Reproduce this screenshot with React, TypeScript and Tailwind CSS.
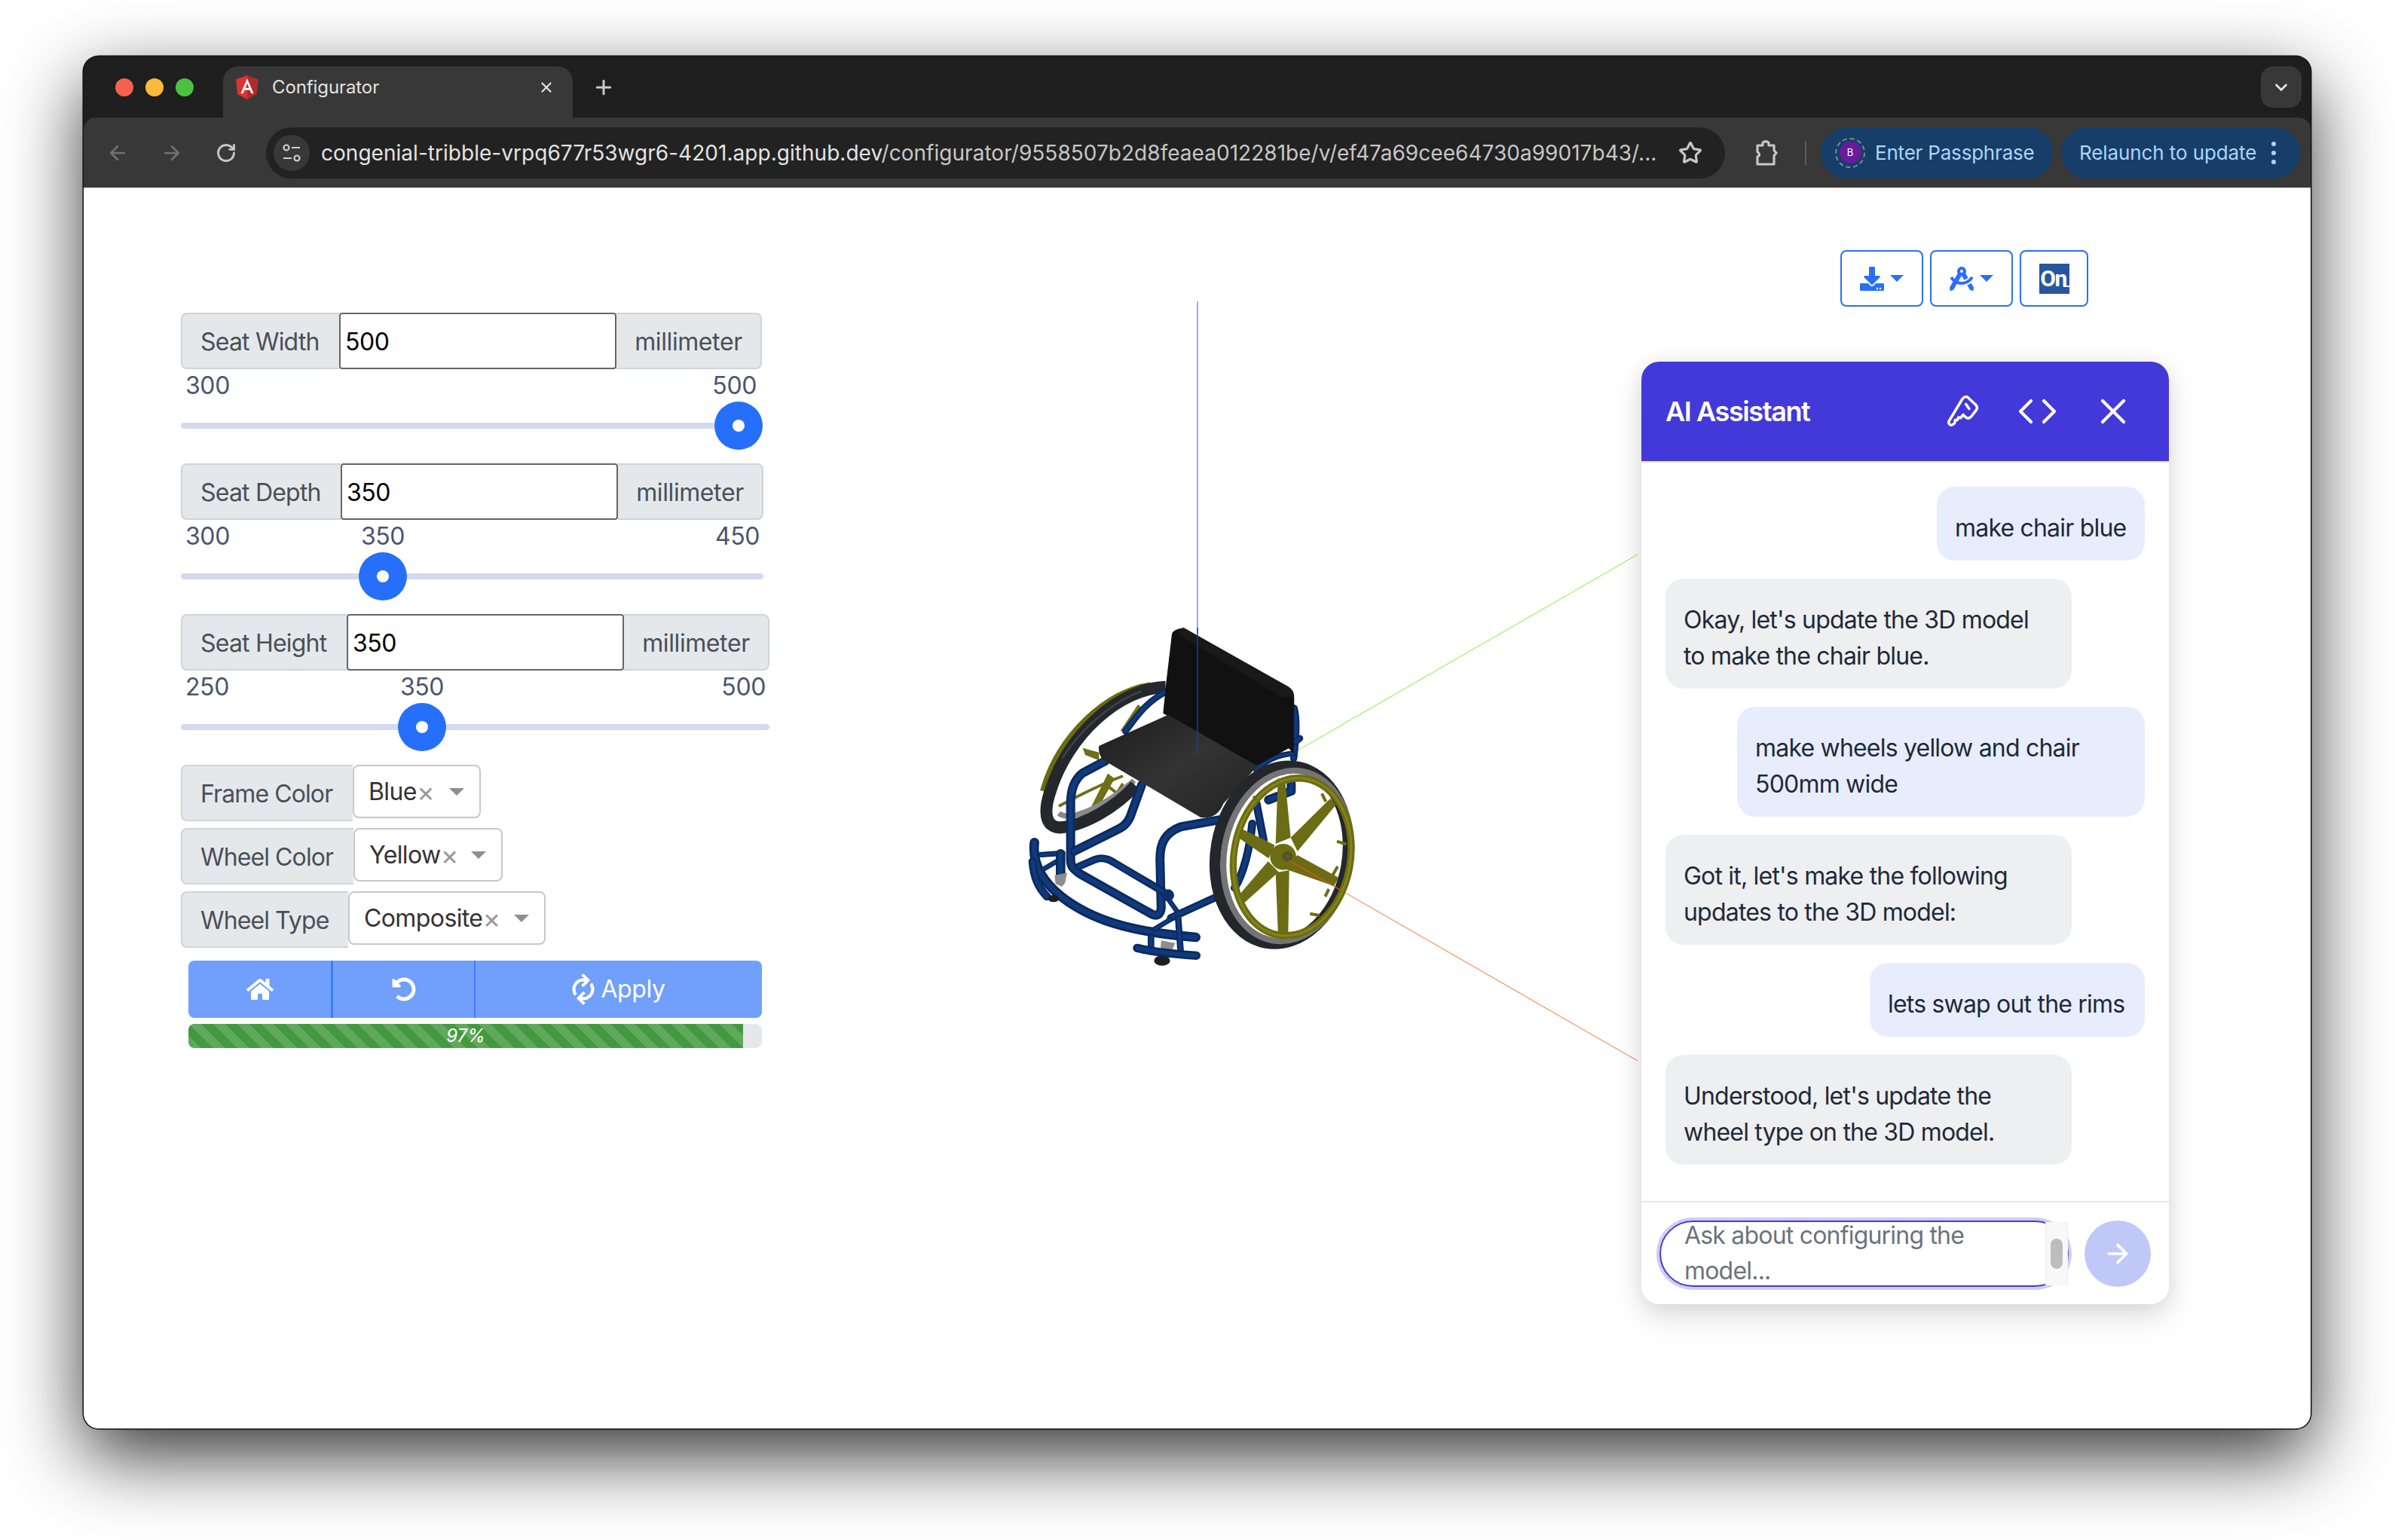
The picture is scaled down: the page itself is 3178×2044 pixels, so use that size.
import { ArrowLeft, ArrowRight, ChevronDown, ChevronLeft, ChevronRight, Plus, RotateCw, Star, X } from "lucide-react";
import { FaDownload, FaDraftingCompass, FaHome, FaSync, FaUndoAlt } from "react-icons/fa";

const sliders = [
  { label: "Seat Width", labelW: "w-[210px]", rowW: "w-[771px]", value: "500", min: "300", max: "500", mid: "", pos: 740, minX: "left-[6px]", maxX: "right-[7px]" },
  { label: "Seat Depth", labelW: "w-[212px]", rowW: "w-[773px]", value: "350", min: "300", max: "450", mid: "350", pos: 268, minX: "left-[6px]", maxX: "right-[5px]" },
  { label: "Seat Height", labelW: "w-[220px]", rowW: "w-[781px]", value: "350", min: "250", max: "500", mid: "350", pos: 320, minX: "left-[6px]", maxX: "right-[5px]" },
];

const selects = [
  { label: "Frame Color", labelW: "w-[228px]", value: "Blue", selectW: "w-[170px]" },
  { label: "Wheel Color", labelW: "w-[229px]", value: "Yellow", selectW: "w-[198px]" },
  { label: "Wheel Type", labelW: "w-[222px]", value: "Composite", selectW: "w-[262px]" },
];

const messages = [
  { user: true, lines: ["make chair blue"], width: "w-[276px]" },
  { user: false, lines: ["Okay, let's update the 3D model", "to make the chair blue."], width: "w-[539px]" },
  { user: true, lines: ["make wheels yellow and chair", "500mm wide"], width: "w-[541px]" },
  { user: false, lines: ["Got it, let's make the following", "updates to the 3D model:"], width: "w-[539px]" },
  { user: true, lines: ["lets swap out the rims"], width: "w-[365px]" },
  { user: false, lines: ["Understood, let's update the", "wheel type on the 3D model."], width: "w-[539px]" },
];

const Tube = ({ d, w = 36 }: { d: string; w?: number }) => (
  <>
    <path d={d} fill="none" stroke="#0b2a5e" strokeWidth={w} strokeLinecap="round" strokeLinejoin="round" />
    <path d={d} fill="none" stroke="#113a7d" strokeWidth={w * 0.5} strokeLinecap="round" strokeLinejoin="round" />
  </>
);

// viewer drawing, coordinates are the full page ones for the axes and a 3x grid for the chair
const Wheelchair = () => (
  <svg className="block" width="848" height="1020" viewBox="1330 400 848 1020">
    <defs>
      <linearGradient id="seat" x1="0" y1="0" x2="1" y2="1">
        <stop offset="0" stopColor="#1c1c1c" />
        <stop offset="0.5" stopColor="#333333" />
        <stop offset="1" stopColor="#232323" />
      </linearGradient>
    </defs>
    <line x1="1720" y1="997" x2="2173" y2="736" stroke="#a5f56e" strokeWidth="1.3" />
    <line x1="1780" y1="1182" x2="2173" y2="1408" stroke="#f59a6c" strokeWidth="1.3" />
    <line x1="1589" y1="400" x2="1589" y2="840" stroke="#7d90f5" strokeWidth="1.5" />
    <g transform="translate(1330 800) scale(0.33333)">
      {/* rear wheel */}
      <path d="M590 328C420 350 220 530 162 750" fill="none" stroke="#6b6b10" strokeWidth="24" />
      <path d="M540 405L470 510L497 516L552 415ZM320 578L385 596L385 628L330 606ZM420 680L345 830L378 825L447 700Z" fill="#6f6f16" />
      <path d="M225 810C300 770 400 720 480 690M310 848C380 830 450 780 480 720M420 730L465 765" fill="none" stroke="#6f6f16" strokeWidth="12" />
      <path d="M225 838C270 875 410 810 525 708" fill="none" stroke="#8a8a8a" strokeWidth="22" />
      <path d="M650 335C470 340 260 520 188 760C160 850 180 898 235 895C330 885 450 815 530 728" fill="none" stroke="#24272c" strokeWidth="48" />
      <path d="M555 352C450 388 320 490 238 620" fill="none" stroke="#3f4349" strokeWidth="7" />

      {/* frame */}
      <Tube d="M655 352C570 395 530 460 490 512" w={26} />
      <Tube d="M410 630L320 678C285 705 272 750 272 800L272 1025C272 1055 290 1065 310 1080L595 1240C620 1252 635 1235 632 1205L628 1030C625 955 650 915 710 892L860 865" w={36} />
      <Tube d="M555 725L510 850C495 885 475 895 455 905L285 990" w={36} />
      <Tube d="M305 1050L370 1022C400 1012 425 1022 445 1035L640 1150" w={30} />
      <Tube d="M128 955C118 1040 160 1110 235 1170C350 1260 500 1310 770 1332" w={38} />
      <Tube d="M120 1030C125 1090 140 1130 178 1170" w={32} />
      <Tube d="M155 1003L240 997" w={22} />
      <Tube d="M165 1060L230 1022" w={20} />
      <Tube d="M232 1000L232 1085" w={38} />
      <Tube d="M650 1165L700 1235" w={20} />
      <Tube d="M670 1255L845 1175" w={30} />
      <Tube d="M605 1300L668 1262" w={20} />
      <Tube d="M700 1255L710 1390" w={26} />
      <Tube d="M592 1330L592 1382" w={26} />
      <Tube d="M1162 420C1175 470 1170 540 1160 620" w={28} />
      <Tube d="M1165 555L1185 540" w={26} />
      <Tube d="M1010 665C1050 630 1090 605 1160 600" w={22} />
      <Tube d="M1150 720L1150 750L1060 785" w={36} />
      <Tube d="M1012 800L1040 945" w={32} />
      <Tube d="M995 880C985 980 960 1080 925 1135" w={32} />
      <circle cx="660" cy="1165" r="24" fill="#0d2f68" />

      {/* casters */}
      <path d="M208 1085L258 1075L250 1115L238 1130L212 1120Z" fill="#8d8d8d" />
      <ellipse cx="204" cy="1178" rx="22" ry="14" fill="#1e1e1e" />
      <path d="M632 1345L688 1355L675 1385L630 1375Z" fill="#8d8d8d" />
      <ellipse cx="636" cy="1425" rx="32" ry="20" fill="#1e1e1e" />
      <Tube d="M537 1375C620 1395 700 1400 772 1405" w={34} />

      {/* seat and back */}
      <path d="M675 125Q680 105 722 100L1140 335Q1162 350 1162 380L1160 600L1140 580L1010 650L640 440L652 320Z" fill="#111111" />
      <path d="M722 100L1140 335Q1160 348 1162 372L1118 378L700 125Q700 108 722 100Z" fill="#191919" />
      <path d="M385 570L660 446L1015 650L880 800Q860 850 815 855L790 855L400 625Q380 600 385 570Z" fill="url(#seat)" />

      {/* front wheel */}
      <ellipse cx="1112" cy="1004" rx="262" ry="356" transform="rotate(10 1112 1004)" fill="none" stroke="#23262b" strokeWidth="44" />
      <ellipse cx="1135" cy="1008" rx="252" ry="342" transform="rotate(10 1135 1008)" fill="none" stroke="#757575" strokeWidth="24" />
      <path d="M1097 700L1125 700L1148 935L1088 960ZM1305 780L1328 805L1175 990L1148 935ZM1340 1095L1320 1128L1125 1060L1175 1005ZM1098 1325L1138 1325L1142 1065L1088 1075ZM930 1178L952 1205L1100 1072L1058 1030ZM942 895L928 928L1060 1018L1085 965Z" fill="#6c6c15" />
      <circle cx="1118" cy="1012" r="52" fill="#6c6c15" />
      <circle cx="1135" cy="1010" r="20" fill="#55550f" />
      <circle cx="1135" cy="1010" r="10" fill="#55585c" />
      <ellipse cx="1154" cy="1012" rx="232" ry="316" transform="rotate(10 1154 1012)" fill="none" stroke="#6d6d10" strokeWidth="28" />
      <ellipse cx="1154" cy="1012" rx="232" ry="316" transform="rotate(10 1154 1012)" fill="none" stroke="#85851f" strokeWidth="8" />
      <path d="M1272 760L1288 792M1332 950L1370 962M1335 1050L1315 1085M1300 1140L1285 1170M1225 1238L1262 1245M1000 770L1012 785" stroke="#6d6d10" strokeWidth="12" />
    </g>
    <line x1="1589" y1="833" x2="1589" y2="1003" stroke="#1f35b8" strokeWidth="1.5" />
    <line x1="1710" y1="1142" x2="1780" y2="1182" stroke="#e0531f" strokeWidth="1.3" />
  </svg>
);

const AngularLogo = () => (
  <svg width="30" height="32" viewBox="0 0 30 32">
    <path d="M15 0L0 5.5L2.3 25L15 32Z" fill="#dd3333" />
    <path d="M15 0L30 5.5L27.7 25L15 32Z" fill="#b02a2a" />
    <path d="M15 4L6.5 24H9.6L11.4 19.5H18.6L20.4 24H23.5ZM17.4 16.8H12.6L15 10.8Z" fill="#ffffff" />
  </svg>
);

const TuneIcon = () => (
  <svg width="26" height="26" viewBox="0 0 26 26" fill="none" stroke="#d0d0d0" strokeWidth="2.2">
    <circle cx="6" cy="6" r="3.5" />
    <path d="M13 6H24M2 20H13" />
    <circle cx="20" cy="20" r="3.5" />
  </svg>
);

const PuzzleIcon = () => (
  <svg width="30" height="34" viewBox="0 0 30 34" fill="none" stroke="#c7c7c7" strokeWidth="3.2" strokeLinejoin="round">
    <path d="M3 7H10V3.5Q14 0 18 3.5V7H25V13.5L28 17L25 20.5V32H3V22Q8 19.5 3 15.5Z" />
  </svg>
);

const KeyIcon = () => (
  <svg width="46" height="44" viewBox="0 0 48 50" fill="none" stroke="#ffffff" strokeWidth="4" strokeLinejoin="round" strokeLinecap="round">
    <path d="M23 6Q27 1 31 4L43 15Q47 19 43 24L36 33Q32 37 28 34L24 30L20 35L17 34L15 38L12 38L11 43Q7 47 4 45Q1 43 3 39Z" />
    <path d="M28 14L33 21" />
  </svg>
);

const Caret = ({ tone }: { tone: "blue" | "gray" }) => (
  <span
    className={
      tone === "blue"
        ? "block h-0 w-0 border-x-[9px] border-t-[9px] border-x-transparent border-t-[#2a6ffb]"
        : "block h-0 w-0 border-x-[10px] border-t-[10px] border-x-transparent border-t-[#8f8f8f]"
    }
  />
);

const BrowserChrome = () => (
  <>
    {/* tab strip */}
    <div className="flex h-[81px] shrink-0 items-end rounded-t-[20px] bg-[#1e1e1e]">
      <div className="mt-[13px] flex h-[68px] w-[185px] shrink-0 items-center gap-[16px] self-start pb-[12px] pl-[42px]">
        <span className="h-[24px] w-[24px] rounded-full bg-[#f7604f]" />
        <span className="h-[24px] w-[24px] rounded-full bg-[#fbba3b]" />
        <span className="h-[24px] w-[24px] rounded-full bg-[#4cc13f]" />
      </div>
      <div className="flex h-[68px] w-[464px] shrink-0 items-center rounded-t-[20px] bg-[#383838] pb-[12px] pl-[17px] pr-[24px]">
        <AngularLogo />
        <span className="ml-[18px] text-[24px] tracking-[-0.1px] text-[#e3e3e3]">Configurator</span>
        <X className="ml-auto text-[#e3e3e3]" size={22} strokeWidth={2.4} />
      </div>
      <div className="ml-[26px] flex h-[68px] items-center pb-[12px]">
        <Plus className="text-[#c8c8c8]" size={30} strokeWidth={2.4} />
      </div>
      <div className="mb-[13px] ml-auto mr-[12px] flex h-[55px] w-[54px] items-center justify-center rounded-[16px] bg-[#383838]">
        <ChevronDown className="text-[#e3e3e3]" size={26} strokeWidth={2.6} />
      </div>
    </div>
    {/* address bar */}
    <div className="flex h-[93px] shrink-0 items-center rounded-t-[16px] bg-[#383838]">
      <ArrowLeft className="ml-[30px] text-[#707070]" size={30} strokeWidth={2.2} />
      <ArrowRight className="ml-[42px] text-[#707070]" size={30} strokeWidth={2.2} />
      <RotateCw className="ml-[43px] text-[#c7c7c7]" size={28} strokeWidth={2.4} />
      <div className="ml-[39px] flex h-[68px] w-[1936px] items-center rounded-full bg-[#222222] pl-[10px]">
        <span className="flex h-[48px] w-[48px] items-center justify-center rounded-full bg-[#383838]">
          <TuneIcon />
        </span>
        <span className="ml-[15px] w-[1775px] whitespace-nowrap text-[28px] tracking-[0.03px] text-[#e3e3e3]">
          congenial-tribble-vrpq677r53wgr6-4201.app.github.dev<span className="text-[#c7c7c7]">/configurator/9558507b2d8feaea012281be/v/ef47a69cee64730a99017b43/...</span>
        </span>
        <Star className="ml-[26px] text-[#c7c7c7]" size={32} strokeWidth={2.4} />
      </div>
      <span className="ml-[40px]">
        <PuzzleIcon />
      </span>
      <span className="ml-[36px] h-[32px] w-[2px] bg-[#5c5c5c]" />
      <div className="ml-[19px] flex h-[68px] w-[308px] items-center rounded-full bg-[#163e68] pl-[19px]">
        <span className="flex h-[40px] w-[40px] items-center justify-center rounded-full border-[2px] border-dashed border-[#7a8a9c]">
          <span className="flex h-[29px] w-[29px] items-center justify-center rounded-full bg-[#6a1b9a] text-[13px] text-white">B</span>
        </span>
        <span className="ml-[13px] text-[26px] tracking-[-0.2px] text-[#aed4f8]">Enter Passphrase</span>
      </div>
      <div className="ml-[11px] flex h-[68px] w-[317px] items-center rounded-full bg-[#163e68] pl-[24px]">
        <span className="text-[26px] tracking-[-0.1px] text-[#aed4f8]">Relaunch to update</span>
        <span className="ml-[20px] flex flex-col gap-[6px]">
          <span className="h-[6px] w-[6px] rounded-full bg-[#aed4f8]" />
          <span className="h-[6px] w-[6px] rounded-full bg-[#aed4f8]" />
          <span className="h-[6px] w-[6px] rounded-full bg-[#aed4f8]" />
        </span>
      </div>
    </div>
  </>
);

const SliderRow = ({ item }: { item: (typeof sliders)[number] }) => (
  <div className={item.rowW}>
    <div className="flex h-[75px] text-[32px] text-[#495057]">
      <span className={`${item.labelW} flex items-center rounded-l-[8px] border-2 border-r-0 border-[#ced4da] bg-[#e5e8eb] pl-[24px] pt-[2px] tracking-[-0.8px]`}>{item.label}</span>
      <input
        readOnly
        value={item.value}
        className="h-[75px] w-[368px] rounded-[4px] border-2 border-[#666666] bg-white pl-[6px] pt-[2px] text-[32px] tracking-[-0.5px] text-black outline-none"
      />
      <span className="flex flex-1 items-center justify-center rounded-r-[8px] border-2 border-l-0 border-[#ced4da] bg-[#e5e8eb] pt-[2px] tracking-[-0.4px]">millimeter</span>
    </div>
    <div className="relative h-[125px] text-[32px] tracking-[-0.4px] text-[#4a5472]">
      <span className={`absolute -top-[2px] ${item.minX}`}>{item.min}</span>
      <span className={`absolute -top-[2px] ${item.maxX}`}>{item.max}</span>
      {item.mid && (
        <span className="absolute -top-[2px] -translate-x-1/2" style={{ left: item.pos }}>
          {item.mid}
        </span>
      )}
      <div className="absolute left-0 right-0 top-[71px] h-[8px] rounded-full bg-[#d3daf0]" />
      <span
        className="absolute top-[43px] flex h-[64px] w-[64px] -translate-x-1/2 items-center justify-center rounded-full bg-[#266ffb]"
        style={{ left: item.pos }}
      >
        <span className="h-[16px] w-[16px] rounded-full bg-white" />
      </span>
    </div>
  </div>
);

const SelectRow = ({ item }: { item: (typeof selects)[number] }) => (
  <div className="flex h-[75px] items-start text-[32px]">
    <span className={`${item.labelW} flex h-[75px] items-center rounded-l-[8px] border-2 border-r-0 border-[#ced4da] bg-[#e5e8eb] pl-[24px] pt-[2px] tracking-[-0.9px] text-[#495057]`}>{item.label}</span>
    <div className={`${item.selectW} flex h-[71px] items-center rounded-[8px] border-2 border-[#c8c8c8] bg-white pl-[19px] pr-[20px]`}>
      <span className="tracking-[-0.6px] text-[#333333]">{item.value}</span>
      <span className="text-[36px] leading-none text-[#999999]">×</span>
      <span className="ml-auto">
        <Caret tone="gray" />
      </span>
    </div>
  </div>
);

const LeftPanel = () => (
  <div className="w-[1219px] shrink-0 pl-[129px] pt-[166px]">
    {sliders.map((item) => (
      <SliderRow key={item.label} item={item} />
    ))}
    <div className="flex flex-col gap-[9px]">
      {selects.map((item) => (
        <SelectRow key={item.label} item={item} />
      ))}
    </div>
    <div className="ml-[10px] mt-[17px] flex h-[76px] w-[761px] rounded-[8px] bg-[#709ffc] text-[32px] text-white">
      <span className="flex w-[192px] items-center justify-center border-r-[3px] border-[#3f7cfb]">
        <FaHome size={36} />
      </span>
      <span className="flex w-[189px] items-center justify-center border-r-[2px] border-[#3f7cfb]">
        <FaUndoAlt size={32} />
      </span>
      <span className="flex flex-1 items-center justify-center gap-[8px] tracking-[-0.4px]">
        <FaSync className="-rotate-45" size={30} />
        Apply
      </span>
    </div>
    <div className="ml-[10px] mt-[8px] h-[32px] w-[761px] overflow-hidden rounded-[8px] bg-[#e5e8eb]">
      <div className="flex h-full w-[736px] items-center justify-center bg-[#43993f] bg-[linear-gradient(45deg,rgba(255,255,255,0.15)_25%,transparent_25%,transparent_50%,rgba(255,255,255,0.15)_50%,rgba(255,255,255,0.15)_75%,transparent_75%,transparent)] bg-[length:32px_32px] text-[24px] italic text-white">
        97%
      </div>
    </div>
  </div>
);

const ToolButtons = () => (
  <div className="mr-[107px] flex h-[75px] justify-end gap-[9px] text-[#2a6ffb]">
    <div className="flex w-[110px] items-center justify-center gap-[8px] rounded-[8px] border-2 border-[#2a6ffb]">
      <FaDownload size={32} />
      <Caret tone="blue" />
    </div>
    <div className="flex w-[110px] items-center justify-center gap-[8px] rounded-[8px] border-2 border-[#2a6ffb]">
      <FaDraftingCompass size={32} />
      <Caret tone="blue" />
    </div>
    <div className="flex w-[91px] items-center justify-center rounded-[8px] border-2 border-[#2a6ffb]">
      <span className="relative flex h-[40px] w-[40px] items-center justify-center bg-[#27569f] pr-[2px] font-[Roboto,sans-serif] text-[30px] font-bold tracking-[-1.5px] text-white">
        On
        <span className="absolute bottom-[9px] right-0 h-[2px] w-[8px] bg-white" />
      </span>
    </div>
  </div>
);

const ChatPanel = () => (
  <div className="mt-[73px] flex h-[1251px] w-[700px] flex-col overflow-hidden rounded-[24px] bg-white shadow-[0_16px_40px_rgba(0,0,0,0.14),0_0_24px_rgba(0,0,0,0.06)]">
    <div className="flex h-[132px] shrink-0 items-center bg-[#4339d9] pl-[32px] text-white">
      <span className="text-[36px] font-semibold tracking-[-1.4px]">AI Assistant</span>
      <span className="ml-auto">
        <KeyIcon />
      </span>
      <span className="ml-[32px] flex">
        <ChevronLeft className="-mr-[25px]" size={56} strokeWidth={1.8} />
        <ChevronRight size={56} strokeWidth={1.8} />
      </span>
      <X className="ml-[29px] mr-[46px]" size={56} strokeWidth={1.8} />
    </div>
    <div className="flex flex-1 flex-col gap-[24px] border-t-2 border-[#e5e7eb] px-[32px] pt-[32px]">
      {messages.map((message) => (
        <div
          key={message.lines[0]}
          className={
            message.user
              ? `${message.width} self-end rounded-[24px] bg-[#e7edfd] px-[24px] pb-[19px] pt-[31px] text-[32px] leading-[48px] tracking-[-0.8px] text-[#1f2937]`
              : `${message.width} self-start rounded-[24px] bg-[#eeeff1] px-[24px] pb-[19px] pt-[31px] text-[32px] leading-[48px] tracking-[-0.8px] text-[#1f2937]`
          }
        >
          {message.lines.map((line) => (
            <div key={line} className="whitespace-nowrap">
              {line}
            </div>
          ))}
        </div>
      ))}
    </div>
    <div className="flex h-[137px] shrink-0 items-center gap-[21px] border-t-2 border-[#e5e7eb] pl-[24px] pr-[24px]">
      <div className="relative h-[88px] w-[543px]">
        <div className="h-[88px] overflow-hidden rounded-[44px] border-2 border-[#4339d9] pl-[31px] text-[32px] leading-[36px] tracking-[-0.8px] text-[#6b7280] shadow-[0_0_0_4px_#cfcdf5]">
          <div className="whitespace-nowrap">Ask about configuring the</div>
          <div className="mt-[11px]">model...</div>
        </div>
        <div className="absolute bottom-[2px] right-[1px] top-[2px] flex w-[30px] items-center justify-center border-x border-[#ececec] bg-[#f8f8f8]">
          <span className="h-[40px] w-[16px] rounded-full bg-[#bdbdbd]" />
        </div>
      </div>
      <div className="flex h-[88px] w-[88px] shrink-0 items-center justify-center rounded-full bg-[#c0c8f8]">
        <ArrowRight className="text-white" size={40} strokeWidth={2.2} />
      </div>
    </div>
  </div>
);

export default function App() {
  return (
    <div className="h-[2044px] w-[3178px] overflow-hidden bg-white pl-[111px] pt-[75px] font-[Inter,sans-serif]">
      <div className="flex h-[1821px] w-[2955px] flex-col rounded-[20px] bg-[#1e1e1e] shadow-[0_0_0_1.5px_#111111,0_36px_100px_rgba(0,0,0,0.8)]">
        <BrowserChrome />
        <div className="flex flex-1 rounded-b-[20px] bg-white">
          <LeftPanel />
          <div className="w-[848px] shrink-0 pt-[151px]">
            <Wheelchair />
          </div>
          <div className="w-[700px] shrink-0 pt-[83px]">
            <ToolButtons />
            <ChatPanel />
          </div>
        </div>
      </div>
    </div>
  );
}
